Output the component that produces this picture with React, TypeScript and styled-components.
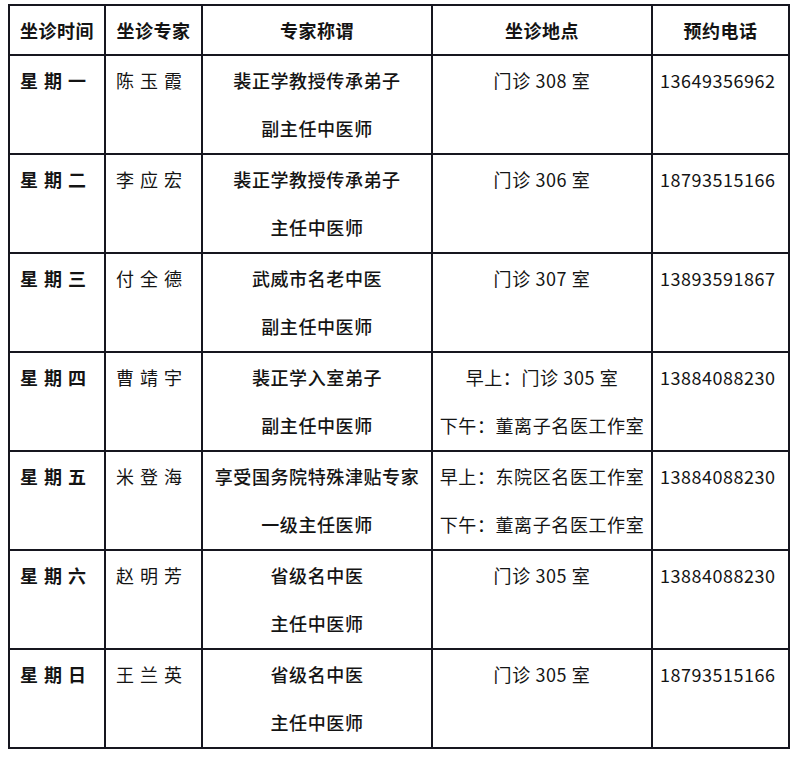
import { createGlobalStyle } from 'styled-components';
import styled from 'styled-components';

const GlobalStyle = createGlobalStyle`
  html, body {
    margin: 0;
    padding: 0;
    background: #ffffff;
  }
  body {
    font-family: "Noto Sans CJK SC", "Noto Sans", sans-serif;
    color: #141414;
  }
`;

const Page = styled.div`
  padding: 4px 0 0 8px;
`;

const Table = styled.table`
  border-collapse: separate;
  border-spacing: 0;
  border-top: 2px solid #16161f;
  border-left: 2px solid #16161f;
  table-layout: fixed;
  width: 782px;
`;

// widths and height include the right/bottom border
const HeadCell = styled.th<{ $width: number }>`
  box-sizing: border-box;
  width: ${(p) => p.$width}px;
  height: 50px;
  padding: 0;
  border-right: 2px solid #16161f;
  border-bottom: 2px solid #16161f;
  font-size: 18px;
  font-weight: 700;
  letter-spacing: 0.5px;
  text-align: center;
  vertical-align: middle;
`;

type Align = 'left' | 'center';

const Cell = styled.td<{ $align: Align; $pad: number; $weight: number; $spacing: number }>`
  height: 97px;
  padding: 0 0 0 ${(p) => p.$pad}px;
  border-right: 2px solid #16161f;
  border-bottom: 2px solid #16161f;
  vertical-align: top;
  text-align: ${(p) => p.$align};
  font-size: 18px;
  font-weight: ${(p) => p.$weight};
  letter-spacing: ${(p) => p.$spacing}px;
  white-space: nowrap;
`;

const Line = styled.div`
  line-height: 48px;
`;

const columns = [
  { title: '坐诊时间', width: 96 },
  { title: '坐诊专家', width: 97 },
  { title: '专家称谓', width: 230 },
  { title: '坐诊地点', width: 220 },
  { title: '预约电话', width: 137 },
];

type Row = {
  day: string;
  name: string;
  title: string[];
  place: string[];
  phone: string;
};

const rows: Row[] = [
  { day: '星期一', name: '陈玉霞', title: ['裴正学教授传承弟子', '副主任中医师'], place: ['门诊 308 室'], phone: '13649356962' },
  { day: '星期二', name: '李应宏', title: ['裴正学教授传承弟子', '主任中医师'], place: ['门诊 306 室'], phone: '18793515166' },
  { day: '星期三', name: '付全德', title: ['武威市名老中医', '副主任中医师'], place: ['门诊 307 室'], phone: '13893591867' },
  { day: '星期四', name: '曹靖宇', title: ['裴正学入室弟子', '副主任中医师'], place: ['早上：门诊 305 室', '下午：董离子名医工作室'], phone: '13884088230' },
  { day: '星期五', name: '米登海', title: ['享受国务院特殊津贴专家', '一级主任医师'], place: ['早上：东院区名医工作室', '下午：董离子名医工作室'], phone: '13884088230' },
  { day: '星期六', name: '赵明芳', title: ['省级名中医', '主任中医师'], place: ['门诊 305 室'], phone: '13884088230' },
  { day: '星期日', name: '王兰英', title: ['省级名中医', '主任中医师'], place: ['门诊 305 室'], phone: '18793515166' },
];

export default function App() {
  return (
    <Page>
      <GlobalStyle />
      <Table>
        <thead>
          <tr>
            {columns.map((c) => (
              <HeadCell key={c.title} $width={c.width}>
                {c.title}
              </HeadCell>
            ))}
          </tr>
        </thead>
        <tbody>
          {rows.map((r) => (
            <tr key={r.day}>
              <Cell $align="left" $pad={10} $weight={700} $spacing={6}>
                <Line>{r.day}</Line>
              </Cell>
              <Cell $align="left" $pad={10} $weight={400} $spacing={6}>
                <Line>{r.name}</Line>
              </Cell>
              <Cell $align="center" $pad={0} $weight={500} $spacing={0.6}>
                {r.title.map((t) => (
                  <Line key={t}>{t}</Line>
                ))}
              </Cell>
              <Cell $align="center" $pad={0} $weight={400} $spacing={0.6}>
                {r.place.map((t) => (
                  <Line key={t}>{t}</Line>
                ))}
              </Cell>
              <Cell $align="left" $pad={7} $weight={400} $spacing={0.5}>
                <Line>{r.phone}</Line>
              </Cell>
            </tr>
          ))}
        </tbody>
      </Table>
    </Page>
  );
}
